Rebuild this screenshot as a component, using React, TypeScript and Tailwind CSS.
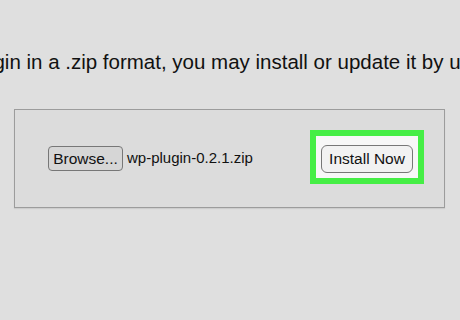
export default function App() {
  return (
    <div
      className="h-[320px] w-[460px] overflow-hidden bg-[#dfdfdf] text-[#111]"
      style={{ fontFamily: '"Liberation Sans", Arial, sans-serif' }}
    >
      <p className="ml-[-157px] mt-[49px] whitespace-nowrap text-[20.5px] leading-[26px]">
        If you have a plugin in a .zip format, you may install or update it by uploading it here.
      </p>

      <div className="ml-[14px] mt-[34px] flex h-[99px] w-[431px] items-center border border-[#9c9c9c] bg-[#dcdcdc] pl-[33px] pr-[20px] shadow-[0_1px_1px_rgba(0,0,0,0.08)]">
        <button className="h-[25px] w-[75px] rounded-[4px] border border-[#777] bg-[#d6d6d6] text-[15.5px] leading-none text-[#111]">
          Browse...
        </button>
        <span className="ml-[4px] text-[15px]">wp-plugin-0.2.1.zip</span>

        <div className="mb-[4px] ml-auto flex h-[54px] w-[114px] items-center justify-center border-[6px] border-[#45ee45] bg-[#f7f7f7]">
          <button className="mt-[4px] h-[28px] w-[92px] rounded-[6px] border border-[#777] bg-[#f2f2f2] text-[15.5px] leading-none text-[#111]">
            Install Now
          </button>
        </div>
      </div>
    </div>
  );
}
